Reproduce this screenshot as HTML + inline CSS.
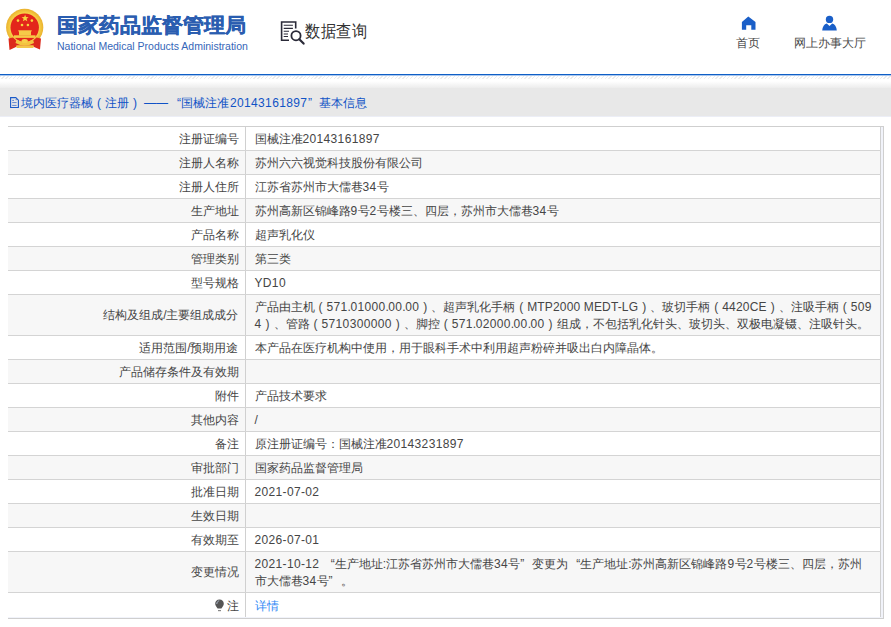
<!DOCTYPE html>
<html><head><meta charset="utf-8">
<style>
*{margin:0;padding:0;box-sizing:border-box}
html,body{width:891px;height:627px;overflow:hidden;background:#fff;font-family:"Liberation Sans",sans-serif;color:#555}
.abs{position:absolute}
#blue{position:absolute;left:0;top:74px;width:891px;height:2px;background:linear-gradient(#0f5fc6 0 1px,#a8c6ee 1px)}
#hatch{position:absolute;left:0;top:76px;width:891px;height:3px;background:repeating-linear-gradient(135deg,#ececec 0 1px,#fff 1px 2.7px)}
#grad{position:absolute;left:0;top:79px;width:891px;height:9px;background:linear-gradient(#fff 0 2px,#fafafa 4px,#ececec)}
#crumb{position:absolute;left:0;top:88px;width:891px;height:28px;background:#e8e8e8;font-size:12px;color:#1053c6;line-height:30px;padding-left:21px;white-space:nowrap}
.cs{position:absolute;top:0}
#crumbedge{position:absolute;left:0;top:116px;width:891px;height:1px;background:#eceef6}
.t1{position:absolute;left:57px;top:14.2px;font-size:21px;line-height:23px;font-weight:bold;color:#2a5db0;-webkit-text-stroke:0.35px #2a5db0;transform:scaleY(0.95);transform-origin:0 0}
.t2{position:absolute;left:57px;top:40px;font-size:10.5px;line-height:12px;color:#3566b8}
.q{position:absolute;left:305px;top:21.6px;font-size:16px;line-height:18px;color:#333;transform:scale(0.97,1.08);transform-origin:0 0}
.nav{position:absolute;top:36px;font-size:12px;line-height:14px;color:#4a4a4a}
#box{position:absolute;left:8px;top:126px;width:876px;border-top:1px solid #cfcfcf;border-right:1px solid #cfcfcf;border-bottom:1px solid #cfcfcf;background:#f1f3fa;padding-right:2px;padding-bottom:1px}
table{width:873px;table-layout:fixed;border-collapse:collapse;font-size:12px;color:#454545;background:#fff;border-right:1px solid #d0d0d0}
td{border-bottom:1px solid #d4d4d4;height:24px;padding:2px 0 0 9px;line-height:17px;white-space:nowrap;vertical-align:middle}
td.l{width:237px;text-align:right;border-right:1px solid #d0d0d0;padding:2px 6px 0 0}
tr:nth-child(even) td{background:#f7f7f7}
tr.two td{height:41px}
tr.last td{border-bottom:none;height:25px;padding-top:4px}
tr.first td{height:23px}
b.n{font-weight:normal;letter-spacing:0.35px}
b.n s{text-decoration:none;letter-spacing:-0.55px}
i.ql,i.qr{font-style:normal;display:inline-block;width:12px;text-align:right}
i.qr{text-align:left}
i.p{font-style:normal;display:inline-block;width:12px;text-align:center}
</style></head><body>
<svg class="abs" style="left:0;top:0" width="52" height="56" viewBox="0 0 52 56">
  <defs><radialGradient id="rg" cx="0.5" cy="0.5" r="0.5"><stop offset="0.75" stop-color="#f9d54a"/><stop offset="1" stop-color="#eab12e"/></radialGradient></defs>
  <circle cx="24.7" cy="27.4" r="18.6" fill="url(#rg)"/>
  <circle cx="24.7" cy="27.6" r="14.2" fill="#e3261b"/>
  <path d="M8.5 38.5 L13 37.5 L18 42 L31.5 42 L36.5 37.5 L41 38.5 L40 49.5 L34 47 L16 47 L9.5 50 Z" fill="#dc2a1c"/>
  <path d="M16.5 39.5 Q24.7 44.5 33 39.5 L34 43 Q24.7 48 15.5 43 Z" fill="#f3c440"/>
  <ellipse cx="24.7" cy="41" rx="3.2" ry="2" fill="#f6cf4a"/>
  <rect x="16" y="45.3" width="18" height="2.6" rx="1.3" fill="#f3c64a"/>
  <rect x="14" y="35.3" width="21.5" height="2.6" fill="#f6ca48"/>
  <rect x="19" y="31" width="12" height="4.5" fill="#f6ca48"/>
  <rect x="18.3" y="30.3" width="13.4" height="1.1" fill="#f6ca48"/>
  <polygon points="25.1,14.7 26,17.1 28.6,17.2 26.6,18.8 27.3,21.3 25.1,19.9 22.9,21.3 23.6,18.8 21.6,17.2 24.2,17.1" fill="#f7d640"/>
  <circle cx="18" cy="20.6" r="1.3" fill="#f7d640"/>
  <circle cx="31.9" cy="20.6" r="1.3" fill="#f7d640"/>
  <circle cx="22" cy="25" r="1.3" fill="#f7d640"/>
  <circle cx="27.9" cy="25" r="1.3" fill="#f7d640"/>
</svg>
<div class="t1">国家药品监督管理局</div>
<div class="t2">National Medical Products Administration</div>
<svg class="abs" style="left:278px;top:18px" width="30" height="30" viewBox="0 0 30 30">
  <path d="M17.7 10.5 V4 H3.6 V22.2 H11" fill="none" stroke="#2a2a38" stroke-width="1.6"/>
  <path d="M5.7 7.3 H14.9 M5.7 10.4 H14.9 M5.7 13.2 H11 M5.7 16 H10 M5.7 18.5 H10" stroke="#2a2a38" stroke-width="1.1"/>
  <circle cx="18" cy="17.7" r="4.6" fill="none" stroke="#2a2a38" stroke-width="1.8"/>
  <path d="M21.3 21.2 L25.6 25.6" stroke="#2a2a38" stroke-width="2.2" stroke-linecap="round"/>
</svg>
<div class="q">数据查询</div>
<svg class="abs" style="left:741px;top:16px" width="15" height="14" viewBox="0 0 15 14">
  <path d="M7.3 0.5 L14.5 6 V13.7 H10.3 V9.2 H5.2 V13.7 H0.9 V6 Z" fill="#1a5fc8"/>
</svg>
<div class="nav" style="left:736px">首页</div>
<svg class="abs" style="left:821px;top:15px" width="17" height="16" viewBox="0 0 17 16">
  <circle cx="8.5" cy="4.4" r="3.7" fill="#1a5fc8"/>
  <path d="M1.2 15.5 Q1.8 9.5 5.8 8.5 L8.5 11 L11.2 8.5 Q15.2 9.5 15.8 15.5 Z" fill="#1a5fc8"/>
</svg>
<div class="nav" style="left:794px">网上办事大厅</div>

<div id="blue"></div><div id="hatch"></div><div id="grad"></div>
<div id="crumb"><span class="cs" style="left:21px">境内医疗器械<i class="p">(</i>注册<i class="p">)</i></span><span class="cs" style="left:144px">——</span><span class="cs" style="left:177px">“</span><span class="cs" style="left:181px">国械注准<span style="letter-spacing:0.35px;margin-left:1px">20143161897</span></span><span class="cs" style="left:308px">”</span><span class="cs" style="left:319px">基本信息</span></div>
<svg class="abs" style="left:9px;top:96px" width="11" height="13" viewBox="0 0 11 13">
  <path d="M1.6 1.6 H6.8 L9.4 4.2 V11.5 H1.6 Z" fill="none" stroke="#1a5ac8" stroke-width="1.1"/>
  <path d="M3.2 4.4 H5 M3.2 6.6 H7.6 M3.2 9.4 H7.6" stroke="#5f86d0" stroke-width="1"/>
  <rect x="6.6" y="3" width="1.2" height="1.2" fill="#5f86d0"/>
</svg>
<div id="crumbedge"></div>

<div id="box">
<table>
<tr class="first"><td class="l">注册证编号</td><td>国械注准<b class="n">20143161897</b></td></tr>
<tr><td class="l">注册人名称</td><td>苏州六六视觉科技股份有限公司</td></tr>
<tr><td class="l">注册人住所</td><td>江苏省苏州市大儒巷<b class="n">34</b>号</td></tr>
<tr><td class="l">生产地址</td><td>苏州高新区锦峰路<b class="n">9</b>号<b class="n">2</b>号楼三、四层，苏州市大儒巷<b class="n">34</b>号</td></tr>
<tr><td class="l">产品名称</td><td>超声乳化仪</td></tr>
<tr><td class="l">管理类别</td><td>第三类</td></tr>
<tr><td class="l">型号规格</td><td><b class="n">YD10</b></td></tr>
<tr class="two"><td class="l">结构及组成/主要组成成分</td><td>产品由主机<i class="p">(</i><b class="n">571<s>.</s>01000<s>.</s>00<s>.</s>00</b><i class="p">)</i>、超声乳化手柄<i class="p">(</i><b class="n" style="letter-spacing:0.15px">MTP2000 MEDT-LG</b><i class="p">)</i>、玻切手柄<i class="p">(</i><b class="n" style="letter-spacing:0.2px">4420CE</b><i class="p">)</i>、注吸手柄<i class="p">(</i><b class="n">509</b><br><b class="n">4</b><i class="p">)</i>、管路<i class="p">(</i><b class="n">5710300000</b><i class="p">)</i>、脚控<i class="p">(</i><b class="n">571<s>.</s>02000<s>.</s>00<s>.</s>00</b><i class="p">)</i>组成，不包括乳化针头、玻切头、双极电凝镊、注吸针头。</td></tr>
<tr><td class="l">适用范围/预期用途</td><td>本产品在医疗机构中使用，用于眼科手术中利用超声粉碎并吸出白内障晶体。</td></tr>
<tr><td class="l">产品储存条件及有效期</td><td></td></tr>
<tr><td class="l">附件</td><td>产品技术要求</td></tr>
<tr><td class="l">其他内容</td><td>/</td></tr>
<tr><td class="l">备注</td><td>原注册证编号：国械注准<b class="n">20143231897</b></td></tr>
<tr><td class="l">审批部门</td><td>国家药品监督管理局</td></tr>
<tr><td class="l">批准日期</td><td><b class="n">2021-07-02</b></td></tr>
<tr><td class="l">生效日期</td><td></td></tr>
<tr><td class="l">有效期至</td><td><b class="n">2026-07-01</b></td></tr>
<tr class="two"><td class="l">变更情况</td><td><b class="n">2021-10-12</b> <i class="ql">“</i>生产地址:江苏省苏州市大儒巷<b class="n">34</b>号<i class="qr">”</i>变更为<i class="ql">“</i>生产地址:苏州高新区锦峰路<b class="n">9</b>号<b class="n">2</b>号楼三、四层，苏州<br>市大儒巷<b class="n">34</b>号<i class="qr">”</i>。</td></tr>
<tr class="last"><td class="l"><svg width="10" height="13" viewBox="0 0 10 13" style="vertical-align:-2px;margin-right:2px"><path d="M4.5 0.6 C7.1 0.6 8.8 2.5 8.8 4.8 C8.8 6.6 7.6 7.6 6.4 9.6 H2.6 C1.4 7.6 0.2 6.6 0.2 4.8 C0.2 2.5 1.9 0.6 4.5 0.6 Z" fill="#555"/><path d="M1.8 5 C1.8 3.2 2.8 2.1 4.2 1.8" fill="none" stroke="#b8c4d8" stroke-width="0.9"/><rect x="3" y="11" width="3" height="1.2" fill="#888"/></svg>注</td><td style="color:#2f88f5">详情</td></tr>
</table>
</div>
</body></html>
